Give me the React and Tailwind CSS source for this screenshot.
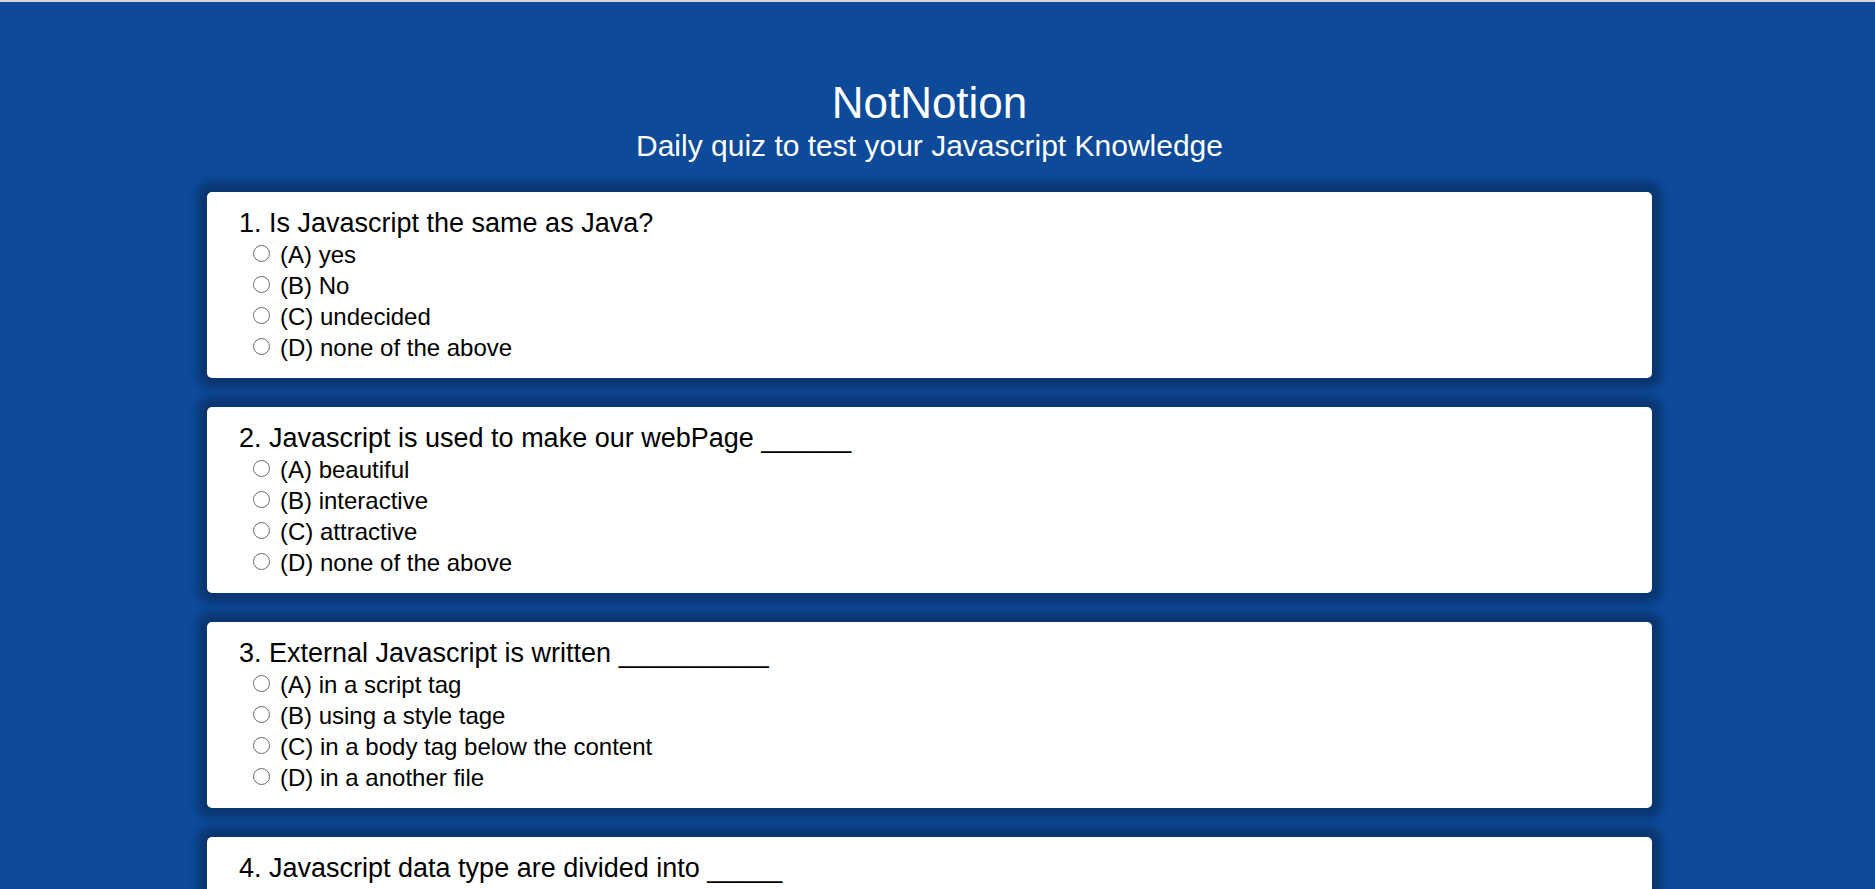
const questions = [
  {
    q: "1. Is Javascript the same as Java?",
    options: ["(A) yes", "(B) No", "(C) undecided", "(D) none of the above"],
  },
  {
    q: "2. Javascript is used to make our webPage ______",
    options: ["(A) beautiful", "(B) interactive", "(C) attractive", "(D) none of the above"],
  },
  {
    q: "3. External Javascript is written __________",
    options: [
      "(A) in a script tag",
      "(B) using a style tage",
      "(C) in a body tag below the content",
      "(D) in a another file",
    ],
  },
  {
    q: "4. Javascript data type are divided into _____",
    options: [
      "(A) primitive and non-primitive",
      "(B) string and number",
      "(C) object and array",
      "(D) none of the above",
    ],
  },
];

function QuestionCard({ item, idx }) {
  return (
    <div className="w-[1445px] h-[186px] shrink-0 bg-white rounded-[5px] shadow-[0_0_8px_10px_rgba(0,0,0,0.27)] pt-[16px] pl-[32px] text-black">
      <h3 className="text-[27px] leading-[30px] font-normal">{item.q}</h3>
      <div className="mt-[1px] pl-[14px]">
        {item.options.map((opt, i) => (
          <label key={i} className="flex items-center h-[31px] text-[24px] leading-[31px]">
            <input
              type="radio"
              name={"q" + idx}
              className="appearance-none w-[17px] h-[17px] -mt-[2px] rounded-full border-[1.5px] border-[#6b6b6b] bg-white mr-[10px] shrink-0"
            />
            <span>{opt}</span>
          </label>
        ))}
      </div>
    </div>
  );
}

export default function App() {
  return (
    <div className="h-[889px] overflow-hidden bg-[#0d4a9a] border-t-2 border-[#d6d6d6] font-['Liberation_Sans',Arial,sans-serif]">
      <div className="w-[1859px]">
        <header className="text-center text-white pt-[75px]">
          <h1 className="text-[44px] leading-[52px] font-normal">NotNotion</h1>
          <p className="text-[30px] leading-[34px]">Daily quiz to test your Javascript Knowledge</p>
        </header>
        <main className="flex flex-col items-center gap-[29px] mt-[29px]">
          {questions.map((item, i) => (
            <QuestionCard key={i} item={item} idx={i} />
          ))}
        </main>
      </div>
    </div>
  );
}
